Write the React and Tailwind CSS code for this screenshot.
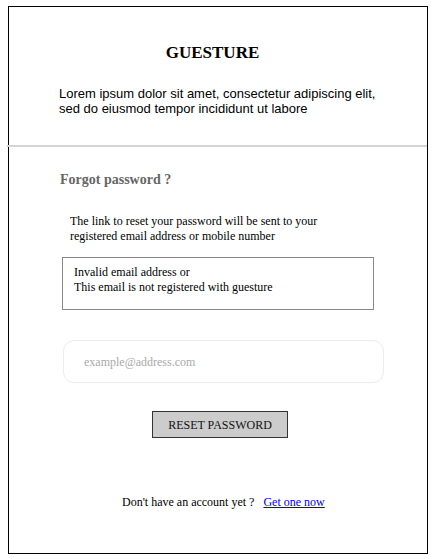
export default function App() {
  return (
    <div className="w-[433px] h-[559px] bg-white pl-[8px] pt-[6px]">
      <div className="w-[420px] h-[548px] border border-black flex flex-col font-['Liberation_Serif',serif] text-black">
        {/* Header */}
        <div className="h-[138px] flex flex-col">
          <h1 className="mt-[35px] pr-[11px] text-center text-[17px] font-bold leading-[22px]">GUESTURE</h1>
          <p className="mt-[22px] ml-[50px] font-['Liberation_Sans',sans-serif] text-[13px] leading-[15px]">
            Lorem ipsum dolor sit amet, consectetur adipiscing elit,
            <br />
            sed do eiusmod tempor incididunt ut labore
          </p>
        </div>
        <div className="h-[2px] -ml-[2px] bg-[#d4d4d4]" />

        {/* Body */}
        <div className="flex flex-col">
          <h2 className="mt-[24px] ml-[51px] text-[14px] font-bold text-[#666] leading-[18px]">Forgot password ?</h2>
          <p className="mt-[25px] ml-[61px] text-[12px] leading-[15px]">
            The link to reset your password will be sent to your
            <br />
            registered email address or mobile number
          </p>
          <div className="mt-[13px] ml-[53px] w-[312px] h-[53px] border border-[#888] px-[11px] pt-[7px] text-[12px] leading-[15px]">
            Invalid email address or
            <br />
            This email is not registered with guesture
          </div>
          <div className="mt-[30px] ml-[54px] w-[321px] h-[43px] rounded-[11px] border border-[#ececec] flex items-center pl-[20px]">
            <input
              type="text"
              placeholder="example@address.com"
              className="w-full outline-none bg-transparent text-[12px] placeholder-[#aaa]"
            />
          </div>
          <div className="mt-[28px] ml-[143px] flex">
            <button className="w-[136px] h-[27px] bg-[#cccccc] border border-[#333] text-[12px] leading-none text-[#111]">
              RESET PASSWORD
            </button>
          </div>
          <div className="mt-[57px] ml-[113px] flex items-center text-[12px] leading-[15px]">
            <span>Don't have an account yet ?</span>
            <a href="#" className="ml-[9px] text-[#0000ee] underline">Get one now</a>
          </div>
        </div>
      </div>
    </div>
  );
}
